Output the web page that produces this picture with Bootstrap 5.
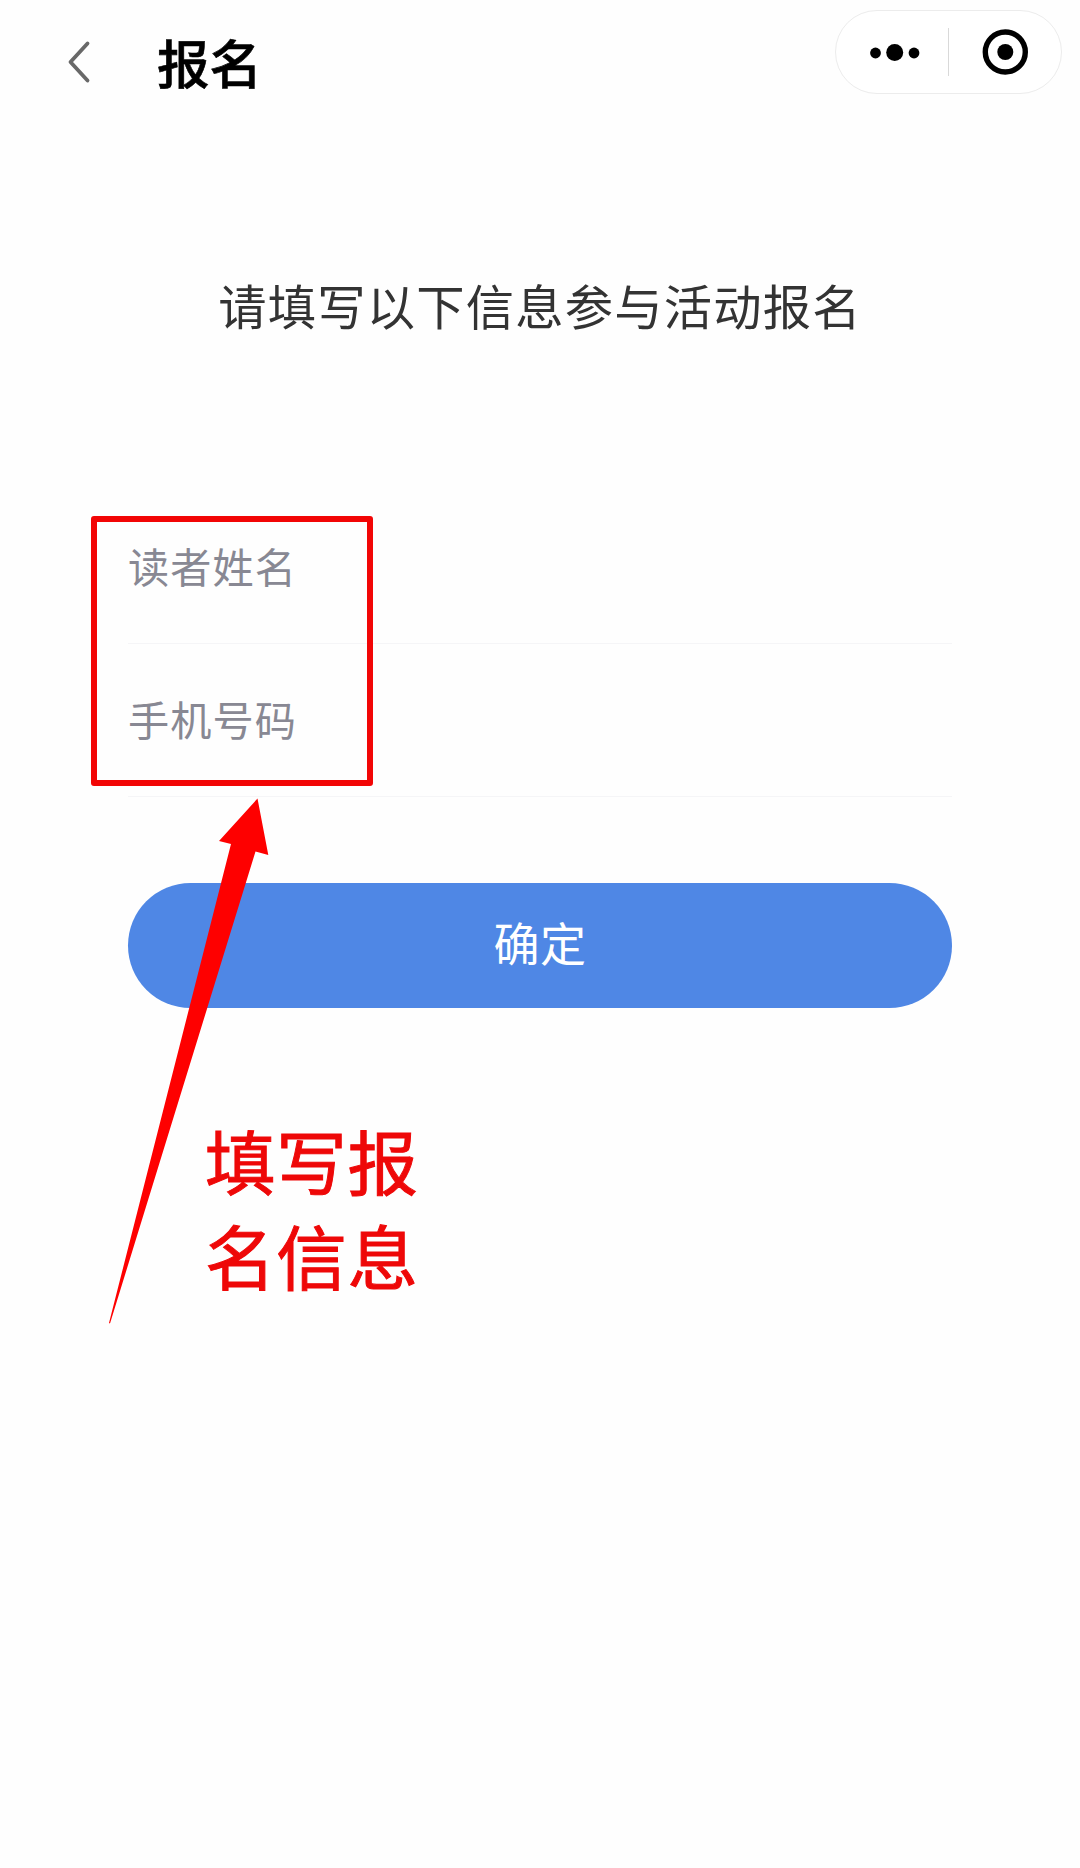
<!DOCTYPE html>
<html lang="zh-CN">
<head>
<meta charset="utf-8">
<meta name="viewport" content="width=device-width, initial-scale=1">
<title>报名</title>
<link href="https://cdn.jsdelivr.net/npm/bootstrap@5.3.0/dist/css/bootstrap.min.css" rel="stylesheet">
<style>
body{font-family:"Noto Sans CJK SC",sans-serif;background:#fefefe;color:#333;min-height:1868px;overflow-x:hidden}
.topbar{height:104px;padding:0 18px 0 66px}
.back-btn{width:26px;height:46px;margin-top:20px}
.page-title{font-size:52.5px;line-height:60px;font-weight:500;color:#000;-webkit-text-stroke:.6px #000;margin:18px 0 0 65px}
.capsule{width:227px;height:84px;margin-top:-1px;border:1px solid #ececec;background:#fff}
.capsule-half{width:112px}
.capsule-sep{width:1px;height:48px;background:#d9d9d9}
.intro{font-size:48.3px;letter-spacing:1.2px;line-height:60px;margin-top:170px}
.signup{margin:179.5px 128px 0}
.field-row{height:153.5px;border-bottom:1px solid #f5f5f7}
.field-first{height:130px;padding-top:21px}
.field-last{padding-top:44px}
.field-row input,.field-row input:focus{font-size:41.2px;letter-spacing:1.1px;line-height:60px;padding:0;height:60px;background:transparent;box-shadow:none}
.field-row input::placeholder{color:#888893;opacity:1}
.confirm-btn,.confirm-btn:hover{height:125px;margin-top:85.5px;padding:0 0 8px;background:#4f87e5;color:#fff;font-size:46px;letter-spacing:.5px;line-height:60px}
.focus-frame{left:91px;top:516px;width:282px;height:270px;border:6px solid #f20505;border-radius:3px;pointer-events:none}
.pointer-arrow{left:100px;top:790px;pointer-events:none}
.hint{left:205px;top:1112px;font-size:70.5px;letter-spacing:.7px;line-height:95px;-webkit-text-stroke:1px #ee0808;color:#ee0808}
</style>
<script src="https://cdn.jsdelivr.net/npm/bootstrap@5.3.0/dist/js/bootstrap.bundle.min.js"></script>
</head>
<body class="position-relative">
<header class="topbar d-flex align-items-center">
  <a href="#" class="d-flex" aria-label="返回"><svg class="back-btn" viewBox="0 0 26 46" fill="none" stroke="#686868" stroke-width="3.8" stroke-linecap="round" stroke-linejoin="round"><path d="M21.5 4.5 4.5 23l17 18.5"/></svg></a>
  <h1 class="page-title">报名</h1>
  <div class="capsule rounded-pill d-flex align-items-center ms-auto">
    <svg class="capsule-half" height="82" viewBox="0 0 112 82"><circle cx="39.5" cy="42" r="5.4"/><circle cx="58.7" cy="41.6" r="8.5"/><circle cx="78" cy="42" r="5.4"/></svg>
    <span class="capsule-sep"></span>
    <svg class="capsule-half" height="82" viewBox="0 0 112 82"><circle cx="56.3" cy="41" r="20" fill="none" stroke="#000" stroke-width="5.4"/><circle cx="56.3" cy="41" r="8"/></svg>
  </div>
</header>
<main>
  <p class="intro text-center mb-0">请填写以下信息参与活动报名</p>
  <form class="signup">
    <div class="field-row field-first"><input class="form-control border-0 rounded-0" type="text" placeholder="读者姓名" aria-label="读者姓名"></div>
    <div class="field-row field-last"><input class="form-control border-0 rounded-0" type="tel" placeholder="手机号码" aria-label="手机号码"></div>
    <button type="button" class="confirm-btn btn border-0 rounded-pill w-100">确定</button>
  </form>
</main>
<div class="focus-frame position-absolute"></div>
<svg class="pointer-arrow position-absolute" width="180" height="540" viewBox="100 790 180 540"><path fill="#fe0000" d="M257.5 798.5 268.3 855 255.5 851.5 110 1323.5 109 1323 231 844 219 841Z"/></svg>
<div class="hint position-absolute">填写报<br>名信息</div>
</body>
</html>
